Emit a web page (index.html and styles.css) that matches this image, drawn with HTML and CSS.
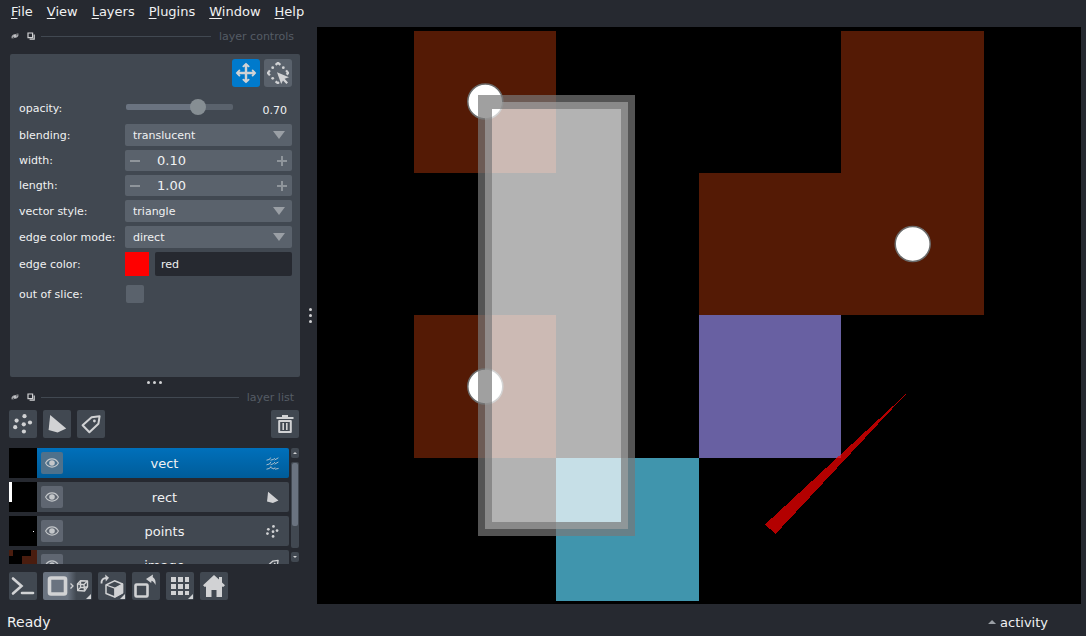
FILE: index.html
```html
<!DOCTYPE html>
<html lang="en">
<head>
    <meta charset="UTF-8">
    <meta name="viewport" content="width=device-width, initial-scale=1.0">
    <title>napari</title>
    <link rel="stylesheet" href="styles.css">
</head>
<body>

<!-- shared icons -->
<svg class="sprite" aria-hidden="true">
    <symbol id="i-eye" viewBox="0 0 14 10">
        <path d="M0.6 5C2 2.4 4.3 0.9 7 0.9S12 2.4 13.4 5C12 7.6 9.7 9.1 7 9.1S2 7.6 0.6 5z" fill="none" stroke="currentColor" stroke-width="1.1"/>
        <circle cx="7" cy="5" r="2.8" fill="currentColor"/>
    </symbol>
    <symbol id="i-hide" viewBox="0 0 8 8">
        <path d="M0.4 5C1 2.8 3 1.8 5 2L7.2 1 7.5 3.2C7 5.2 5 6.2 3 5.9L1 7z" fill="currentColor" opacity="0.75"/>
        <path d="M1 6.8L7.4 1.2" stroke="#262930" stroke-width="0.7"/>
        <circle cx="4" cy="4" r="1.1" fill="currentColor"/>
    </symbol>
    <symbol id="i-float" viewBox="0 0 8 8">
        <path d="M1 1h4.6v4.6H1z" fill="none" stroke="currentColor" stroke-width="1.2"/>
        <path d="M7.2 2.6v4.6H2.6" fill="none" stroke="currentColor" stroke-width="1.2"/>
    </symbol>
    <symbol id="i-points" viewBox="0 0 20 20">
        <g fill="currentColor">
            <circle cx="11.5" cy="2.2" r="2.1"/>
            <circle cx="3.6" cy="6.6" r="2.1"/>
            <circle cx="17" cy="8.5" r="2.1"/>
            <circle cx="10.8" cy="10.3" r="2.1"/>
            <circle cx="2.2" cy="13.2" r="2.1"/>
            <circle cx="10.9" cy="17.5" r="2.1"/>
        </g>
    </symbol>
    <symbol id="i-shape" viewBox="0 0 20 20">
        <path d="M3.2 1L19.2 14.6 10.6 18.6 1.6 16z" fill="currentColor"/>
    </symbol>
    <symbol id="i-label" viewBox="0 0 20 20">
        <path d="M10.6 3.2L18.6 2.2 17.4 9.8 8.4 18.2 1.6 11.2z" fill="none" stroke="currentColor" stroke-width="2" stroke-linejoin="round"/>
        <circle cx="13.4" cy="7" r="1.4" fill="currentColor"/>
    </symbol>
    <symbol id="i-vectors" viewBox="0 0 13 13">
        <g fill="none" stroke="currentColor" stroke-width="0.8">
            <path d="M0.5 3.2L3.5 2.4 4.6 0.6M4.5 3.2L7.5 2.4 8.8 1M8.6 3L12.4 0.8"/>
            <path d="M0.5 7.8L3.5 7 5 4.8M4.5 7.8L7.5 6.6 9 5M8.6 7.2L12.4 5"/>
            <path d="M0.5 12.2L3.5 11.4 5 9.4M4.5 10.4L8 12 9 10.4M9 12.2L12.6 11.4"/>
        </g>
    </symbol>
</svg>

<nav class="menubar">
    <button><u>F</u>ile</button>
    <button><u>V</u>iew</button>
    <button><u>L</u>ayers</button>
    <button><u>P</u>lugins</button>
    <button><u>W</u>indow</button>
    <button><u>H</u>elp</button>
</nav>

<div class="main">
    <aside class="sidebar">
        <div class="dock-title">
            <button aria-label="hide layer controls"><svg><use href="#i-hide"/></svg></button>
            <button aria-label="float layer controls"><svg><use href="#i-float"/></svg></button>
            <span class="line"></span>
            <span>layer controls</span>
        </div>

        <section class="controls">
            <div class="modes">
                <button class="mode active" aria-label="pan and zoom">
                    <svg viewBox="0 0 20 20">
                        <path d="M10 2v16M2 10h16" stroke="currentColor" stroke-width="2.2"/>
                        <path d="M7.6 4L10 1.6 12.4 4M7.6 16L10 18.4 12.4 16M4 7.6L1.6 10 4 12.4M16 7.6L18.4 10 16 12.4" fill="currentColor" stroke="currentColor" stroke-width="1.6" stroke-linejoin="round" stroke-linecap="round"/>
                    </svg>
                </button>
                <button class="mode" aria-label="transform">
                    <svg viewBox="0 0 22 22">
                        <path d="M8.6 2.8L11 0.8l2.4 2M2.9 8.4L0.9 11l2 2.4M19.1 8.4L21.2 11l-1.6 1.6M8.6 19.4l2.2 1.8 1.2-1" fill="none" stroke="currentColor" stroke-width="2.2"/>
                        <g fill="currentColor">
                            <circle cx="5.7" cy="5.7" r="1.4"/>
                            <circle cx="16.3" cy="5.7" r="1.4"/>
                            <circle cx="5.7" cy="16.3" r="1.4"/>
                            <path d="M10 10.2L22 15.2 17.6 16.8 21 20.4 19.4 22 16 18.4 14.2 22z"/>
                        </g>
                    </svg>
                </button>
            </div>

            <div class="row row-opacity">
                <label for="opacity">opacity:</label>
                <input type="range" id="opacity" min="0" max="1" step="0.01" value="0.7">
                <output for="opacity">0.70</output>
            </div>
            <div class="row">
                <label for="blending">blending:</label>
                <div class="combo"><select id="blending"><option>translucent</option></select></div>
            </div>
            <div class="row">
                <label for="width">width:</label>
                <div class="spin">
                    <button class="minus" aria-label="decrease width"></button>
                    <input type="text" id="width" value="0.10">
                    <button class="plus" aria-label="increase width"></button>
                </div>
            </div>
            <div class="row">
                <label for="length">length:</label>
                <div class="spin">
                    <button class="minus" aria-label="decrease length"></button>
                    <input type="text" id="length" value="1.00">
                    <button class="plus" aria-label="increase length"></button>
                </div>
            </div>
            <div class="row">
                <label for="style">vector style:</label>
                <div class="combo"><select id="style"><option>triangle</option></select></div>
            </div>
            <div class="row">
                <label for="color-mode">edge color mode:</label>
                <div class="combo"><select id="color-mode"><option>direct</option></select></div>
            </div>
            <div class="row">
                <label for="color">edge color:</label>
                <button class="swatch" aria-label="pick edge color"></button>
                <input type="text" id="color" class="color-name" value="red">
            </div>
            <div class="row row-check">
                <label for="out-of-slice">out of slice:</label>
                <input type="checkbox" id="out-of-slice">
            </div>
        </section>

        <div class="dots"><i></i><i></i><i></i></div>

        <div class="dock-title">
            <button aria-label="hide layer list"><svg><use href="#i-hide"/></svg></button>
            <button aria-label="float layer list"><svg><use href="#i-float"/></svg></button>
            <span class="line"></span>
            <span>layer list</span>
        </div>

        <div class="toolbar layer-buttons">
            <button class="tool" aria-label="new points layer"><svg><use href="#i-points"/></svg></button>
            <button class="tool" aria-label="new shapes layer"><svg><use href="#i-shape"/></svg></button>
            <button class="tool" aria-label="new labels layer"><svg><use href="#i-label"/></svg></button>
            <button class="tool delete" aria-label="delete layer">
                <svg viewBox="0 0 20 20">
                    <path d="M7 1h6v2h5.500v2H1.500V3H7z" fill="currentColor"/>
                    <path d="M4.200 7h11.600v11H4.200z" fill="none" stroke="currentColor" stroke-width="2" stroke-linejoin="round"/>
                    <path d="M8.200 9v7M11.800 9v7" stroke="currentColor" stroke-width="1.600"/>
                </svg>
            </button>
        </div>

        <div class="layer-list">
            <ul class="layers">
                <li class="layer selected">
                    <svg class="thumb" viewBox="0 0 28 30"></svg>
                    <button class="eye" aria-label="toggle vect"><svg><use href="#i-eye"/></svg></button>
                    <span class="name">vect</span>
                    <svg class="type"><use href="#i-vectors"/></svg>
                </li>
                <li class="layer">
                    <svg class="thumb" viewBox="0 0 28 30"><path d="M0 0h3v20H0z" fill="#fff"/></svg>
                    <button class="eye" aria-label="toggle rect"><svg><use href="#i-eye"/></svg></button>
                    <span class="name">rect</span>
                    <svg class="type"><use href="#i-shape"/></svg>
                </li>
                <li class="layer">
                    <svg class="thumb" viewBox="0 0 28 30"><path d="M24 15h1v1h-1z" fill="#fff"/></svg>
                    <button class="eye" aria-label="toggle points"><svg><use href="#i-eye"/></svg></button>
                    <span class="name">points</span>
                    <svg class="type"><use href="#i-points"/></svg>
                </li>
                <li class="layer">
                    <svg class="thumb" viewBox="0 0 28 30"><path d="M0 0h4v6H0zM22 0h6v14H13V6h9z" fill="#4a1d0f"/></svg>
                    <button class="eye" aria-label="toggle image"><svg><use href="#i-eye"/></svg></button>
                    <span class="name">image</span>
                    <svg class="type"><use href="#i-label"/></svg>
                </li>
            </ul>
            <div class="scrollbar">
                <button class="up" aria-label="scroll up"></button>
                <div class="track"><div class="handle"></div></div>
                <button class="down" aria-label="scroll down"></button>
            </div>
        </div>

        <div class="toolbar">
            <button class="tool" aria-label="console">
                <svg viewBox="0 0 28 28">
                    <path d="M4 6.500L12.500 14 4 21.500" fill="none" stroke="currentColor" stroke-width="2.600" stroke-linecap="round"/>
                    <path d="M13 21h11" stroke="currentColor" stroke-width="2.600" stroke-linecap="round"/>
                </svg>
            </button>
            <button class="tool ndisplay more" aria-label="toggle 2D and 3D view">
                <svg viewBox="0 0 49 28">
                    <rect x="6.500" y="6" width="16" height="16" rx="1.500" fill="none" stroke="currentColor" stroke-width="3.600"/>
                    <path d="M27.500 11.500l2.500 2.500-2.500 2.500" fill="none" stroke="currentColor" stroke-width="1.300"/>
                    <g fill="none" stroke="currentColor" stroke-width="1.400" stroke-linejoin="round">
                        <path d="M34.500 12l3-3.200 7 .2v5.500l-3 4.500-6.800-.5z"/>
                        <path d="M34.500 12l6.500.500 3.500-3.500M41 12.500l.500 6.500M37.500 9v6.500l-3 3M37.500 15.500l7-.500"/>
                    </g>
                </svg>
            </button>
            <button class="tool more" aria-label="roll dimensions">
                <svg viewBox="0 0 28 28">
                    <path d="M8 13l8.500-4.200 8 3.200v8.800l-7.700 4.200L8 21.500z" fill="none" stroke="currentColor" stroke-width="1.500" stroke-linejoin="round"/>
                    <path d="M8 13l8.800 3.200 7.700-4.200v8.800L16.800 25v-8.800" fill="none" stroke="currentColor" stroke-width="1.300" stroke-linejoin="round"/>
                    <path d="M16.800 16.200l7.700-4.200v8.800L16.800 25z" fill="currentColor"/>
                    <path d="M3.500 11.500C3.300 8 5 6 8.500 6" fill="none" stroke="currentColor" stroke-width="1.800"/>
                    <path d="M7.200 2.500l3.800 3.200-3.200 3.800z" fill="currentColor"/>
                </svg>
            </button>
            <button class="tool" aria-label="transpose dimensions">
                <svg viewBox="0 0 28 28">
                    <rect x="3.500" y="12.500" width="12" height="12" rx="1" fill="none" stroke="currentColor" stroke-width="2.600"/>
                    <path d="M14 7l7-4.500-.300 2.500c2.500 1.500 3.300 4.500 2.800 8-1-2.500-2.300-3.800-4-4.300l-.300 2.300z" fill="currentColor"/>
                </svg>
            </button>
            <button class="tool more" aria-label="grid view">
                <svg viewBox="0 0 28 28">
                    <path d="M5 5h5v5H5zM12 5h5v5h-5zM19 5h4v5h-4zM5 12h5v5H5zM12 12h5v5h-5zM19 12h4v5h-4zM5 19h5v4H5zM12 19h5v4h-5zM19 19h4v4h-4z" fill="currentColor"/>
                </svg>
            </button>
            <button class="tool" aria-label="reset view">
                <svg viewBox="0 0 28 28">
                    <path d="M14 3l5 4.600V5h3v5.400l3 2.800-1.800 1.800-1.200-.600V25h-5.500v-7h-5v7H6V14.400L4.800 15 3 13.200z" fill="currentColor"/>
                </svg>
            </button>
        </div>
    </aside>

    <div class="dots splitter"><i></i><i></i><i></i></div>

    <div class="canvas">
        <svg viewBox="0 0 764 577" role="img" aria-label="viewer canvas">
            <!-- image layer -->
            <g shape-rendering="crispEdges">
                <path d="M97 4h142v142H97zM97 288h142v143H97zM524 4h143v284H382V146h142z" fill="#541a05"/>
                <path d="M382 288h142v143H382z" fill="#6860a2"/>
                <path d="M239 431h143v143H239z" fill="#4095ad"/>
            </g>
            <!-- points layer -->
            <g fill="#fff" stroke="#6b6b6b" stroke-width="1.500">
                <circle cx="168.300" cy="74.500" r="17.500"/>
                <circle cx="168.300" cy="359.500" r="17.500"/>
                <circle cx="595.700" cy="217" r="17.500"/>
            </g>
            <!-- shapes layer -->
            <g shape-rendering="crispEdges">
                <rect x="168" y="75" width="143" height="427" fill="#fff" fill-opacity="0.7" stroke="#777" stroke-width="14" stroke-opacity="0.7"/>
            </g>
            <!-- vectors layer -->
            <path d="M589 367L448 497.500 458.500 507z" fill="#f00" fill-opacity="0.7" shape-rendering="crispEdges"/>
        </svg>
    </div>
</div>

<footer class="statusbar">
    <span>Ready</span>
    <button class="activity">activity</button>
</footer>

</body>
</html>
```
FILE: styles.css
```css
* {
    box-sizing: border-box;
}

body {
    display: flex;
    flex-direction: column;
    height: 100vh;
    margin: 0;
    background-color: #262930;
    color: #f0f1f2;
    font-family: "DejaVu Sans", sans-serif;
    font-size: 13px;
}

button,
input,
select {
    margin: 0;
    padding: 0;
    border: none;
    border-radius: 2px;
    background: none;
    color: inherit;
    font: inherit;
}

button {
    cursor: pointer;
}

.sprite {
    display: none;
}

.menubar {
    display: flex;
    gap: 14px;
    height: 24px;
    padding: 0 0 2px 11px;
}

.menubar u {
    text-underline-offset: 2px;
}

.main {
    display: flex;
    flex: 1;
    min-height: 0;
    padding: 3px 5px 0 0;
}

.sidebar {
    display: flex;
    flex-direction: column;
    flex: 0 0 300px;
    min-width: 0;
    padding: 0 1px 4px 9px;
}

/* dock titles */
.dock-title {
    display: flex;
    align-items: center;
    gap: 8px;
    height: 18px;
    padding: 0 5px 0 2px;
    color: #555c65;
    font-size: 11px;
}

.dock-title button {
    display: flex;
    color: #d1d2d4;
}

.dock-title svg {
    width: 8px;
    height: 8px;
}

.dock-title .line {
    flex: 1;
    height: 1px;
    margin-left: -2px;
    background-color: #414851;
}

/* layer controls */
.controls {
    display: flex;
    flex: 1;
    flex-direction: column;
    gap: 4px;
    margin: 9px -1px 0 1px;
    padding: 5px 8px 0 9px;
    border-radius: 2px;
    background-color: #414851;
    font-size: 11px;
}

.modes {
    display: flex;
    justify-content: flex-end;
    gap: 4px;
    margin-bottom: 3px;
}

.mode {
    display: flex;
    align-items: center;
    justify-content: center;
    width: 28px;
    height: 28px;
    border-radius: 3px;
    background-color: #5a626c;
    color: #d1d2d4;
}

.mode.active {
    background-color: #007acc;
}

.mode svg {
    width: 22px;
    height: 22px;
}

.row {
    display: flex;
    align-items: center;
}

.row label {
    flex: 0 0 106px;
    white-space: nowrap;
}

.row-opacity {
    height: 26px;
}

.row-opacity label {
    padding-top: 2px;
}

.row-opacity input {
    appearance: none;
    width: 107px;
    height: 16px;
    margin-left: 1px;
}

.row-opacity input::-webkit-slider-runnable-track {
    height: 6px;
    border-radius: 2px;
    background: linear-gradient(to right, #6a7380 67%, #5a626c 67%);
}

.row-opacity input::-webkit-slider-thumb {
    appearance: none;
    width: 16px;
    height: 16px;
    margin-top: -5px;
    border-radius: 50%;
    background-color: #868e93;
}

.row-opacity output {
    flex: 1;
    padding: 6px 5px 0 0;
    text-align: right;
}

.combo {
    display: flex;
    align-items: center;
    flex: 1;
    height: 22px;
    padding-right: 7px;
    border-radius: 2px;
    background-color: #5a626c;
}

.combo select {
    appearance: none;
    flex: 1;
    height: 22px;
    padding-left: 8px;
}

.combo::after {
    content: "";
    width: 12px;
    height: 8px;
    background-color: #9a9fa5;
    clip-path: polygon(0 0, 100% 0, 50% 100%);
}

.spin {
    display: flex;
    flex: 1;
    min-width: 0;
    height: 21px;
    border-radius: 2px;
    background-color: #5a626c;
}

.spin input {
    flex: 1;
    min-width: 0;
    padding-left: 12px;
    font-size: 13px;
}

.spin button {
    flex: 0 0 20px;
    background: linear-gradient(#8f959b, #8f959b) center / 10px 1px no-repeat;
}

.spin .plus {
    background: linear-gradient(#8f959b, #8f959b) center / 10px 2px no-repeat,
                linear-gradient(#8f959b, #8f959b) center / 2px 10px no-repeat;
}

.spin .minus {
    background-size: 10px 2px;
}

.swatch {
    flex: 0 0 24px;
    height: 24px;
    border-radius: 0;
    background-color: #f00;
}

.color-name {
    flex: 1;
    min-width: 0;
    height: 24px;
    margin-left: 6px;
    padding-left: 6px;
    background-color: #262930;
}

.row-check {
    height: 28px;
}

.row-check input {
    appearance: none;
    width: 18px;
    height: 18px;
    margin-left: 1px;
    background-color: #5a626c;
}

/* resize handles */
.dots {
    display: flex;
    align-items: center;
    justify-content: center;
    gap: 3px;
    height: 11px;
}

.dots i {
    width: 3px;
    height: 3px;
    border-radius: 50%;
    background-color: #d1d2d4;
}

.splitter {
    flex: 0 0 17px;
    flex-direction: column;
    height: auto;
    padding-left: 3px;
}

/* button rows */
.toolbar {
    display: flex;
    gap: 6px;
}

.layer-buttons {
    margin: 4px 0 10px;
}

.tool {
    position: relative;
    display: flex;
    align-items: center;
    justify-content: center;
    width: 28px;
    height: 28px;
    background-color: #414851;
    color: #d1d2d4;
}

.tool svg {
    width: 28px;
    height: 28px;
}

.layer-buttons .tool svg {
    width: 20px;
    height: 20px;
}

.tool.delete {
    margin-left: auto;
}

.tool.ndisplay {
    width: 49px;
    background: linear-gradient(to right, #6a7380 50%, #414851 68%);
}

.tool.ndisplay svg {
    width: 49px;
}

/* corner mark of buttons with a right-click menu */
.tool.more::after {
    content: "";
    position: absolute;
    right: 1px;
    bottom: 1px;
    width: 5px;
    height: 5px;
    background-color: #d1d2d4;
    clip-path: polygon(100% 0, 100% 100%, 0 100%);
}

/* layer list */
.layer-list {
    display: flex;
    gap: 2px;
    height: 116px;
    margin-bottom: 8px;
}

.layers {
    display: flex;
    flex: 1;
    flex-direction: column;
    gap: 4px;
    margin: 0;
    padding: 0;
    overflow: hidden;
    list-style: none;
}

.layer {
    display: flex;
    flex: 0 0 30px;
    align-items: center;
    padding-right: 10px;
    border-radius: 2px;
    background-color: #414851;
}

.layer.selected {
    background: linear-gradient(#0070bb, #005c99);
}

.thumb {
    width: 28px;
    height: 30px;
    background-color: #000;
}

.eye {
    display: flex;
    align-items: center;
    justify-content: center;
    width: 22px;
    height: 22px;
    margin-left: 4px;
    background-color: #5f6671;
    color: #c4c7ca;
}

.selected .eye {
    background-color: #4f718b;
}

.eye svg {
    width: 14px;
    height: 10px;
}

.name {
    flex: 1;
    text-align: center;
}

.type {
    width: 13px;
    height: 13px;
    color: #d1d2d4;
}

.scrollbar {
    display: flex;
    flex-direction: column;
    gap: 4px;
    width: 8px;
    padding-bottom: 2px;
}

.scrollbar button {
    display: flex;
    align-items: center;
    justify-content: center;
    height: 10px;
    background-color: #414851;
}

.scrollbar button::after {
    content: "";
    width: 4px;
    height: 2px;
    background-color: #d1d2d4;
    clip-path: polygon(50% 0, 100% 100%, 0 100%);
}

.scrollbar .down::after {
    clip-path: polygon(0 0, 100% 0, 50% 100%);
}

.track {
    flex: 1;
    padding: 1px;
    border-radius: 2px;
    background-color: #414851;
}

.handle {
    height: 75%;
    border-radius: 2px;
    background-color: #6a7380;
}

/* viewer */
.canvas {
    flex: 1;
    min-width: 0;
    background-color: #000;
}

.canvas svg {
    display: block;
    width: 100%;
    height: 100%;
}

.statusbar {
    display: flex;
    align-items: center;
    justify-content: space-between;
    height: 32px;
    padding: 4px 38px 0 7px;
    font-size: 14px;
}

.activity {
    display: flex;
    align-items: center;
    gap: 4px;
    font-size: 13px;
}

.activity::before {
    content: "";
    width: 8px;
    height: 4px;
    background-color: #9a9fa5;
    clip-path: polygon(50% 0, 100% 100%, 0 100%);
}
```
